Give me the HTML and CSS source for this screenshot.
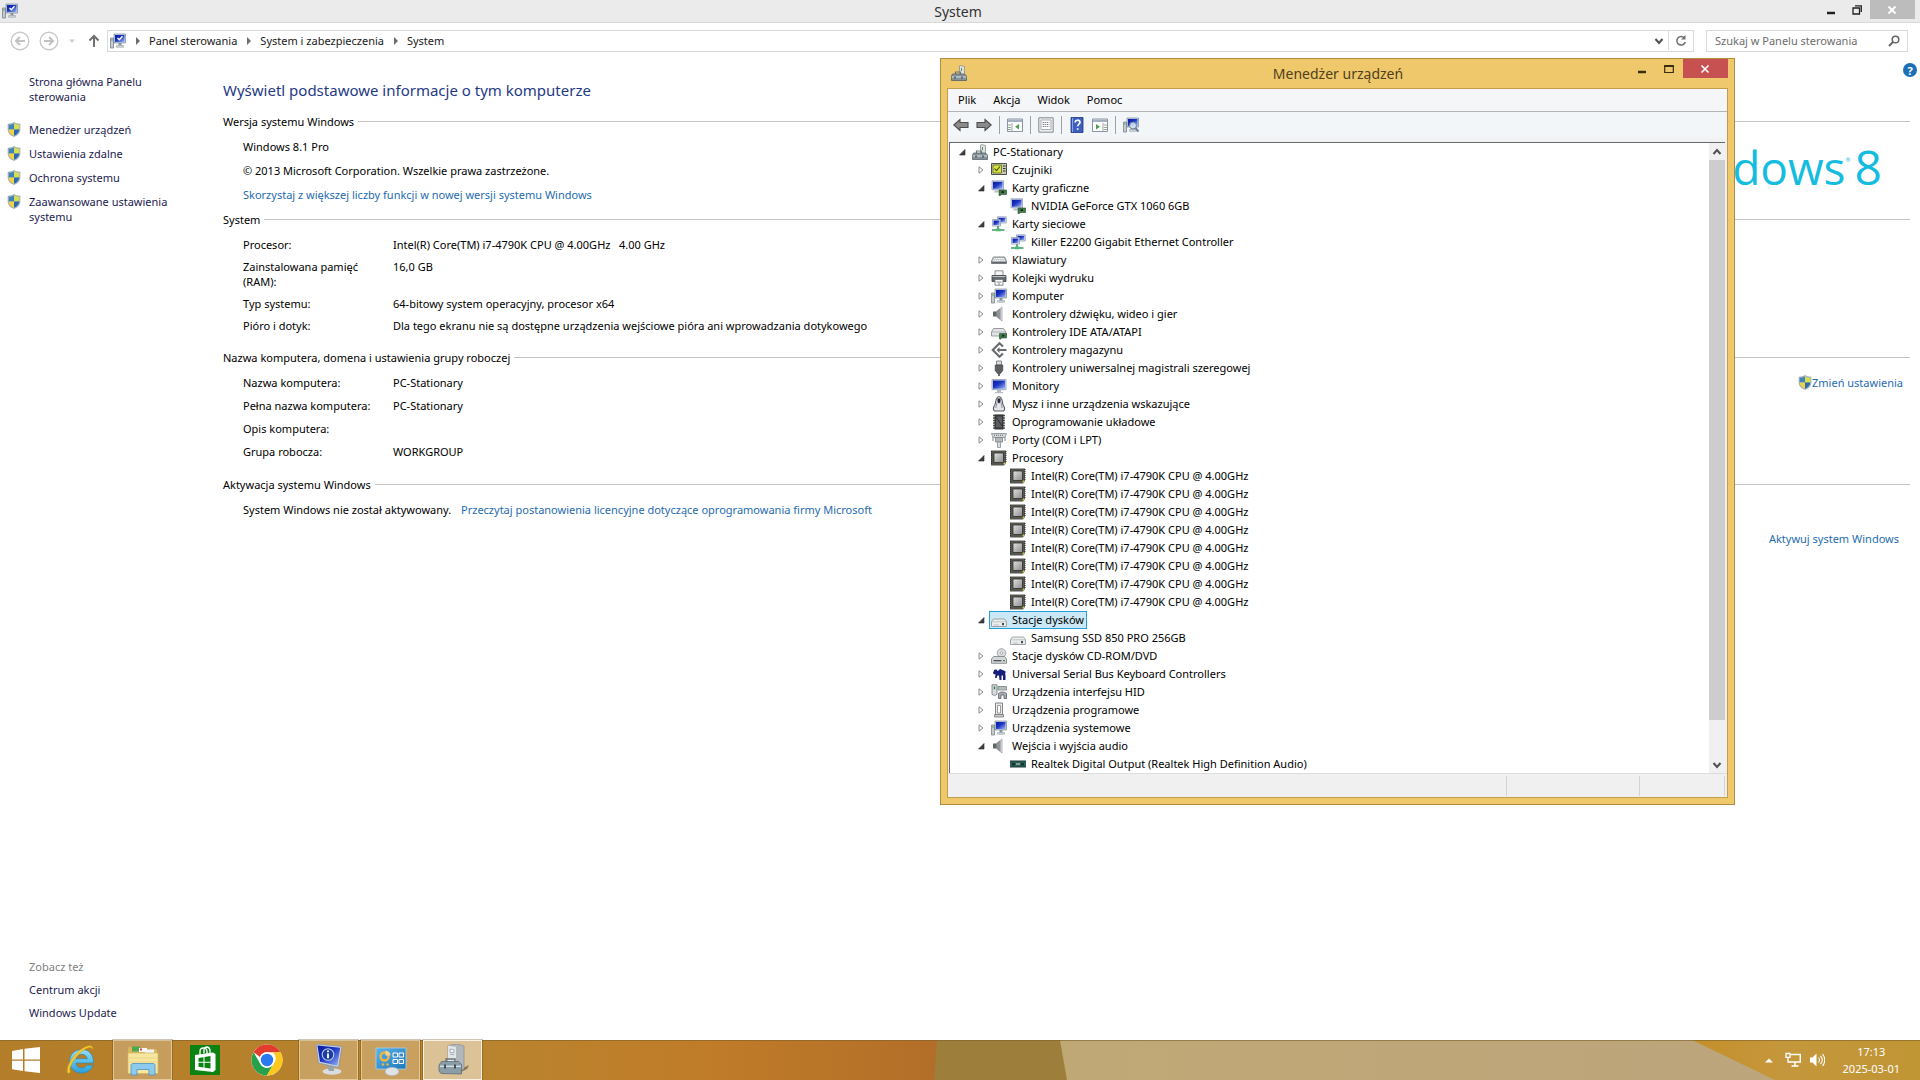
FILE: index.html
```html
<!DOCTYPE html>
<html lang="pl">
<head>
    <meta charset="utf-8">
    <title>System</title>
    <link rel="stylesheet" href="styles.css">
</head>
<body>

<svg class="defs" aria-hidden="true">
    <defs>
        <linearGradient id="g-screen" x1="0" y1="0" x2="1" y2="1">
            <stop offset="0" stop-color="#0a1a9c"/><stop offset=".45" stop-color="#1c34c4"/><stop offset="1" stop-color="#9db8f4"/>
        </linearGradient>
        <linearGradient id="g-metal" x1="0" y1="0" x2="0" y2="1">
            <stop offset="0" stop-color="#f4f5f6"/><stop offset="1" stop-color="#93999f"/>
        </linearGradient>
        <linearGradient id="g-chip" x1="0" y1="0" x2="1" y2="1">
            <stop offset="0" stop-color="#e2e2e2"/><stop offset="1" stop-color="#8c8c8c"/>
        </linearGradient>
        <linearGradient id="g-ie" x1="0" y1="0" x2="0" y2="1">
            <stop offset="0" stop-color="#8fe0fb"/><stop offset="1" stop-color="#2aa0dc"/>
        </linearGradient>
        <linearGradient id="g-panel" x1="0" y1="0" x2="1" y2="1">
            <stop offset="0" stop-color="#5cb4e8"/><stop offset="1" stop-color="#1c78bc"/>
        </linearGradient>
    </defs>
    <symbol id="open" viewBox="0 0 8 8"><path d="M7 1.500v5.500H1.500z" fill="#404040" stroke="#262626" stroke-width=".6"/></symbol>
    <symbol id="shut" viewBox="0 0 8 8"><path d="M2 .8v6.400L6 4z" fill="#fff" stroke="#8c8c8c"/></symbol>
    <symbol id="sep" viewBox="0 0 6 8"><path d="M1 0l4 4-4 4z" fill="#6d6d6d"/></symbol>
    <symbol id="down" viewBox="0 0 10 10"><path d="M1.500 3L5 7l3.500-4" fill="none" stroke="#505050" stroke-width="2"/></symbol>
    <symbol id="up" viewBox="0 0 10 10"><path d="M1.500 7L5 3l3.500 4" fill="none" stroke="#505050" stroke-width="2"/></symbol>
    <symbol id="shield" viewBox="0 0 14 16">
        <path d="M7 0c1.800 1.400 4 1.800 6.800 1.800v6c0 4-2.800 6.700-6.800 8.200C3 14.500.2 11.800.2 7.800v-6C3 1.800 5.200 1.400 7 0z" fill="#a9b4bb"/>
        <path d="M7 1.500V8H1.400V2.900C3.600 2.800 5.400 2.400 7 1.500z" fill="#3f83bd"/>
        <path d="M7 1.500V8h5.600V2.900C10.400 2.800 8.600 2.400 7 1.500z" fill="#d6e04e"/>
        <path d="M7 8v6.700C3.800 13.400 1.500 11.200 1.400 8z" fill="#f0d33e"/>
        <path d="M7 8v6.700c3.200-1.300 5.500-3.500 5.600-6.700z" fill="#2d6cb0"/>
    </symbol>
    <symbol id="pc" viewBox="0 0 16 16">
        <path d="M.5 5h3v10h-3z" fill="#c5cbd0" stroke="#6d757c" stroke-width=".7"/><path d="M1.200 7h1.500" stroke="#3a9a3a"/>
        <path d="M4 1h11.500v9H4z" fill="#c9d4e4" stroke="#66758e" stroke-width=".6"/><path d="M5 2h9.500v7H5z" fill="url(#g-screen)"/>
        <path d="M8.500 10h3v2.500h-3z" fill="#8b949c"/><path d="M6.500 12.500h7v1.800h-7z" fill="#cfd4d8" stroke="#8b949c" stroke-width=".5"/>
    </symbol>
    <symbol id="pccheck" viewBox="0 0 16 16"><use href="#pc" width="16" height="16"/><path d="M7.500 5l1.800 1.800L12.500 3.200" fill="none" stroke="#fff" stroke-width="1.300"/></symbol>
    <symbol id="manager" viewBox="0 0 16 16">
        <path d="M9.500.5l4 1V10h-5V1z" fill="#dfe3e0" stroke="#7d8684" stroke-width=".7"/><path d="M10.500 3v3" stroke="#5d8f64"/>
        <path d="M4.500 9.500V7h5v2.500" fill="none" stroke="#6b747a" stroke-width="1.200"/>
        <path d="M1.500 9h12l2 2v4.500H.5V11z" fill="#85929a" stroke="#4d585f" stroke-width=".7"/><path d="M.8 12h14.400" stroke="#d9e2e6"/><path d="M4 11.500v2M11 11.500v2" stroke="#333" stroke-width="1.200"/>
    </symbol>
    <symbol id="sensor" viewBox="0 0 16 16"><path d="M.5 1.500h15v11H.5z" fill="#c8ccb4" stroke="#4e504a"/><path d="M2 3h8.500v8H2z" fill="#d9e437" stroke="#5c6428" stroke-width=".8"/><path d="M3.500 6.500l2 2.200L9 4.500" fill="none" stroke="#3d4a18" stroke-width="1.100"/><path d="M12 4h2.500M12 6.500h2.500M12 9h2.500" stroke="#333" stroke-width="1.200"/></symbol>
    <symbol id="monitor" viewBox="0 0 16 16"><path d="M1 1.500h14v10.200H1z" fill="#cfd9ea" stroke="#8794ac" stroke-width=".7"/><path d="M2 2.500h12v8.200H2z" fill="url(#g-screen)"/><path d="M6 12h4v2H6zM4 14h8v1.200H4z" fill="#b4bcc3"/></symbol>
    <symbol id="gpu" viewBox="0 0 16 16"><path d="M1 .8h11.500v9H1z" fill="#cfd9ea" stroke="#8794ac" stroke-width=".7"/><path d="M2 1.800h9.500v7H2z" fill="url(#g-screen)"/><path d="M3.500 10.500h4v2h-4z" fill="#b4bcc3"/><path d="M8 10h7.500v4.500H9.500v1H8z" fill="#437b4b" stroke="#244b2b" stroke-width=".6"/><path d="M10.500 11.200H13V13h-2.500z" fill="#162c1a"/></symbol>
    <symbol id="net" viewBox="0 0 16 16"><path d="M6.500.8h8.700V7H6.500z" fill="#dce5f4" stroke="#8391ab" stroke-width=".7"/><path d="M7.500 1.800h6.700V6H7.500z" fill="url(#g-screen)"/><path d="M1.500 3.500h8V10h-8z" fill="#e8eef8" stroke="#8391ab" stroke-width=".7"/><path d="M2.500 4.500h6V9h-6z" fill="url(#g-screen)"/><path d="M7 10v4M1 14h12.500" stroke="#3c9b63" stroke-width="1.600"/><path d="M5 12.500h4.500v2.800H5z" fill="#52b77b"/></symbol>
    <symbol id="keyboard" viewBox="0 0 16 16"><path d="M2.500 5h11l2 4v2.500H.5V9z" fill="#c4c8cb" stroke="#6a6f74" stroke-width=".8"/><path d="M3 6.500h10M2.300 8.300h11.400" stroke="#fff" stroke-dasharray="1.200 .6"/><path d="M.8 10.500h14.400" stroke="#60666c" stroke-width="1.500"/></symbol>
    <symbol id="printer" viewBox="0 0 16 16"><path d="M4 .8h8V6H4z" fill="#f3f4f5" stroke="#777" stroke-width=".8"/><path d="M1 5.500h14v6H1z" fill="#656b70" stroke="#3b4044" stroke-width=".8"/><path d="M1.500 6.500h13" stroke="#bfc5c9"/><path d="M4 9.500h8v5.700H4z" fill="#fff" stroke="#6b7074" stroke-width=".8"/><path d="M5.500 12h5M7 14h2" stroke="#666" stroke-width=".8"/></symbol>
    <symbol id="speaker" viewBox="0 0 16 16"><path d="M2 5.500h3.500v5H2z" fill="#5f6569"/><path d="M5.500 5.500L11 1v14l-5.500-4.500z" fill="#8f9599" stroke="#61676b" stroke-width=".5"/><path d="M9.500 2.500L11 1v14l-1.500-1.500z" fill="#cdd0d3"/></symbol>
    <symbol id="ide" viewBox="0 0 16 16"><path d="M2.500 4.500h10l2.500 3.500v4H.5V8z" fill="#e2e4e5" stroke="#808588" stroke-width=".8"/><path d="M.8 8h14" stroke="#a4a9ac" stroke-width=".8"/><path d="M8.500 9.500h7v4.500H10v1H8.500z" fill="#437b4b" stroke="#244b2b" stroke-width=".6"/><path d="M11 10.800h2.300v1.800H11z" fill="#162c1a"/></symbol>
    <symbol id="storage" viewBox="0 0 16 16"><path d="M12 4.500L8.500 1.300 1.800 8l6.700 6.700L12 11.500" fill="none" stroke="#686c6f" stroke-width="2.200"/><path d="M7 8h8.500" stroke="#686c6f" stroke-width="2"/><path d="M8.500 5v6L5.500 8z" fill="#686c6f"/></symbol>
    <symbol id="usb" viewBox="0 0 16 16"><path d="M5.500 1h5v4h-5z" fill="#dcdee0" stroke="#6e7275" stroke-width=".8"/><path d="M4.200 5h7.600v5.500L9.500 13.500h-3L4.200 10.500z" fill="#5c6063" stroke="#34373a" stroke-width=".6"/><path d="M7.200 13.500h1.600V16H7.200z" fill="#44484a"/></symbol>
    <symbol id="mouse" viewBox="0 0 16 16"><path d="M3.500 15c-1.500-1-1-4 .5-6.500C5 6 4.500.8 8 .8S11 6 12 8.500c1.500 2.500 2 5.500.5 6.500z" fill="#e4e5e8" stroke="#5c5e66" stroke-width="1.100"/><path d="M6.500 2.500h3V6L8 7.500 6.500 6z" fill="#24283c"/><path d="M6 6.500L4.800 12M10 6.500l1.200 5.500" stroke="#777b88" stroke-width=".8"/></symbol>
    <symbol id="firmware" viewBox="0 0 16 16"><path d="M2 1.500h12M2 4h12M2 6.500h12M2 9h12M2 11.500h12M2 14h12" stroke="#555" stroke-width="1.400"/><path d="M3.500.5h9v15h-9z" fill="#35373a"/><path d="M5 2.500h6v11H5z" fill="#5c5f62"/><path d="M5 3l6 9" stroke="#2a2c2e"/></symbol>
    <symbol id="port" viewBox="0 0 16 16"><path d="M.5 1.500h15l-1.500 4H2z" fill="#d2d6d9" stroke="#888d91" stroke-width=".8"/><path d="M3 3.200h10" stroke="#666" stroke-dasharray="1 1"/><path d="M4.500 5.500h7V10h-7z" fill="#b3b8bc" stroke="#7d8286" stroke-width=".8"/><path d="M6.500 10h3v5.500h-3z" fill="#dcdfe1" stroke="#8a8f93" stroke-width=".8"/><path d="M2 5v4M14 5v4" stroke="#999" stroke-width="1.200"/></symbol>
    <symbol id="cpu" viewBox="0 0 16 16"><path d="M0 .5h15V13l-2 2.500H0z" fill="#55564f"/><path d="M.5 1v14M15 1v12" stroke="#2e2f2b" stroke-dasharray="1 1"/><path d="M12.500 12.500h2v2h-2z" fill="#d0bd4c"/><path d="M3 3h9.500v9.500H3z" fill="url(#g-chip)" stroke="#2f302d" stroke-width=".8"/></symbol>
    <symbol id="disk" viewBox="0 0 16 16"><path d="M2.500 7h11l2 2.500v5H.5v-5z" fill="#eceeee" stroke="#8c9193" stroke-width=".8"/><path d="M.8 9.800h14.400" stroke="#b4b9bb" stroke-width=".8"/><path d="M11 11h2v2.200h-2z" fill="#444a4c"/><path d="M3 13h5" stroke="#babfc1"/></symbol>
    <symbol id="cdrom" viewBox="0 0 16 16"><circle cx="10.500" cy="5" r="4.300" fill="#dcdee0" stroke="#8f9497" stroke-width=".8"/><circle cx="10.500" cy="5" r="1.300" fill="#fff" stroke="#8f9497" stroke-width=".7"/><path d="M2.500 8.500h11l2 2.500v4.300H.5V11z" fill="#d3d7da" stroke="#777c80" stroke-width=".8"/><path d="M2.500 12.700h8" stroke="#444" stroke-width="1.200"/><path d="M12 12.700h2" stroke="#3b8b47" stroke-width="1.200"/></symbol>
    <symbol id="usbkb" viewBox="0 0 16 16"><path d="M2 6l3-2.500L7 5l2-2 5 2 .5 5v4H12V9.500h-1.500V14H8.500L8 9.500H6.500L5.500 12H4l.5-3.500L2.500 8z" fill="#16207c"/><path d="M3 4.500h3M10.500 6h4M6 8h7" stroke="#16207c" stroke-width="1.500"/></symbol>
    <symbol id="hid" viewBox="0 0 16 16"><path d="M1 .8h5v9.500c-1.500 1.400-3.500 1.400-5 0z" fill="#d9dcde" stroke="#6d7275" stroke-width=".8"/><path d="M2.700 2.500h1.500v2.800H2.700z" fill="#2d8b45"/><path d="M7 2.500h8.500V6H7z" fill="#cbd0d3" stroke="#777c80" stroke-width=".8"/><path d="M7.500 4h7.500" stroke="#777" stroke-dasharray="1 1"/><path d="M7.500 14.500V9.500c1.500-2 6-2 8 0v5h-2.500V11H10v3.500z" fill="#a6acb0" stroke="#5a5f63" stroke-width=".8"/></symbol>
    <symbol id="soft" viewBox="0 0 16 16"><path d="M4.500 1h7v11.500h-7z" fill="#e8eaeb" stroke="#777" stroke-width=".9"/><path d="M6.500 3.500h3V11h-3z" fill="#fff" stroke="#888" stroke-width=".8"/><path d="M3.500 12.500h9v2.500h-9z" fill="#c6cacc" stroke="#777" stroke-width=".8"/></symbol>
    <symbol id="card" viewBox="0 0 16 16"><path d="M0 5h16v6H0z" fill="#2f5d55"/><path d="M0 5h16M0 11h16" stroke="#1b3a35"/><path d="M2 7h3v2.500H2zM11 7h3v2.500h-3z" fill="#173530"/><path d="M6 8h4" stroke="#8fc0ac" stroke-width="1.500"/></symbol>
    <symbol id="arrow" viewBox="0 0 16 16"><path d="M.8 8L7 2.500v3h8v5H7v3z" fill="#8b8b8b" stroke="#4e4e4e" stroke-width="1.100"/></symbol>
    <symbol id="pane" viewBox="0 0 16 16"><path d="M.5 2h15v12.500H.5z" fill="#fff" stroke="#8a94a2"/><path d="M1 3.800h14" stroke="#a4b1c0" stroke-width="2.500"/><path d="M5 6v8M1 8h3M1 10.500h3M1 12.500h3" stroke="#8aa08c" stroke-width=".9"/><path d="M12 7v5.500L8 9.700z" fill="#4f9b52"/></symbol>
</svg>

<div class="system">
    <header class="titlebar">
        <svg class="icon"><use href="#pccheck"/></svg>
        <h1>System</h1>
        <div class="controls">
            <button aria-label="Minimalizuj"><svg class="mark" viewBox="0 0 10 10"><path d="M1 8h8" stroke="#222" stroke-width="2.500"/></svg></button>
            <button aria-label="Przywróć"><svg class="mark" viewBox="0 0 10 10"><path d="M1 3h6.500v6H1zM3 .8h6.300V7" fill="none" stroke="#222" stroke-width="1.300"/></svg></button>
            <button class="close" aria-label="Zamknij"><svg class="mark" viewBox="0 0 10 10"><path d="M1.500 1.500l7 7m0-7l-7 7" stroke="#fff" stroke-width="1.800"/></svg></button>
        </div>
    </header>

    <nav class="navbar">
        <button class="round" aria-label="Wstecz"><svg viewBox="0 0 20 20"><circle cx="10" cy="10" r="8.800" fill="none" stroke="#c9c9c9" stroke-width="1.400"/><path d="M15 10H6m4-4l-4 4 4 4" fill="none" stroke="#c2c2c2" stroke-width="2"/></svg></button>
        <button class="round" aria-label="Dalej"><svg viewBox="0 0 20 20"><circle cx="10" cy="10" r="8.800" fill="none" stroke="#c9c9c9" stroke-width="1.400"/><path d="M5 10h9m-4-4l4 4-4 4" fill="none" stroke="#c2c2c2" stroke-width="2"/></svg></button>
        <button class="recent" aria-label="Ostatnie strony"><svg viewBox="0 0 8 8"><path d="M1 2.500h6L4 6z" fill="#d0d0d0"/></svg></button>
        <button class="upward" aria-label="W górę"><svg viewBox="0 0 12 14"><path d="M6 13V2M1.500 6.500L6 2l4.500 4.500" fill="none" stroke="#707070" stroke-width="2"/></svg></button>
        <div class="address">
            <svg class="icon"><use href="#pccheck"/></svg>
            <svg class="sep"><use href="#sep"/></svg>
            <a href="#">Panel sterowania</a>
            <svg class="sep"><use href="#sep"/></svg>
            <a href="#">System i zabezpieczenia</a>
            <svg class="sep"><use href="#sep"/></svg>
            <a href="#">System</a>
            <button class="history" aria-label="Poprzednie lokalizacje"><svg><use href="#down"/></svg></button>
            <button class="refresh" aria-label="Odśwież"><svg viewBox="0 0 12 12"><path d="M9.500 3A4.300 4.300 0 1 0 10.300 7" fill="none" stroke="#707070" stroke-width="1.500"/><path d="M10.500 0v4.500H6z" fill="#707070"/></svg></button>
        </div>
        <div class="search">
            <input type="search" aria-label="Szukaj" placeholder="Szukaj w Panelu sterowania">
            <svg viewBox="0 0 12 12"><circle cx="7.500" cy="4.500" r="3.300" fill="none" stroke="#666" stroke-width="1.500"/><path d="M5 7L1 11" stroke="#666" stroke-width="2"/></svg>
        </div>
    </nav>

    <div class="content">
        <aside class="sidebar">
            <a class="home" href="#">Strona główna Panelu sterowania</a>
            <ul class="tasks">
                <li><svg class="shield"><use href="#shield"/></svg><a href="#">Menedżer urządzeń</a></li>
                <li><svg class="shield"><use href="#shield"/></svg><a href="#">Ustawienia zdalne</a></li>
                <li><svg class="shield"><use href="#shield"/></svg><a href="#">Ochrona systemu</a></li>
                <li><svg class="shield"><use href="#shield"/></svg><a href="#">Zaawansowane ustawienia systemu</a></li>
            </ul>
            <div class="seealso">
                <span>Zobacz też</span>
                <a href="#">Centrum akcji</a>
                <a href="#">Windows Update</a>
            </div>
        </aside>

        <main class="info">
            <button class="help" aria-label="Pomoc">?</button>
            <h2>Wyświetl podstawowe informacje o tym komputerze</h2>

            <section class="edition">
                <h3>Wersja systemu Windows</h3>
                <div class="body">
                    <div class="lines">
                        <p>Windows 8.1 Pro</p>
                        <p>© 2013 Microsoft Corporation. Wszelkie prawa zastrzeżone.</p>
                        <p><a href="#">Skorzystaj z większej liczby funkcji w nowej wersji systemu Windows</a></p>
                    </div>
                    <div class="logo">Windows<sup>®</sup><span>8</span></div>
                </div>
            </section>

            <section class="hardware">
                <h3>System</h3>
                <dl class="body">
                    <dt>Procesor:</dt><dd>Intel(R) Core(TM) i7-4790K CPU @ 4.00GHz &nbsp; 4.00 GHz</dd>
                    <dt>Zainstalowana pamięć (RAM):</dt><dd>16,0 GB</dd>
                    <dt>Typ systemu:</dt><dd>64-bitowy system operacyjny, procesor x64</dd>
                    <dt>Pióro i dotyk:</dt><dd>Dla tego ekranu nie są dostępne urządzenia wejściowe pióra ani wprowadzania dotykowego</dd>
                </dl>
            </section>

            <section class="naming">
                <h3>Nazwa komputera, domena i ustawienia grupy roboczej</h3>
                <div class="body">
                    <dl>
                        <dt>Nazwa komputera:</dt><dd>PC-Stationary</dd>
                        <dt>Pełna nazwa komputera:</dt><dd>PC-Stationary</dd>
                        <dt>Opis komputera:</dt><dd></dd>
                        <dt>Grupa robocza:</dt><dd>WORKGROUP</dd>
                    </dl>
                    <a class="change" href="#"><svg class="shield"><use href="#shield"/></svg>Zmień ustawienia</a>
                </div>
            </section>

            <section class="activation">
                <h3>Aktywacja systemu Windows</h3>
                <div class="body">
                    <p>System Windows nie został aktywowany. <a href="#">Przeczytaj postanowienia licencyjne dotyczące oprogramowania firmy Microsoft</a></p>
                    <a class="activate" href="#">Aktywuj system Windows</a>
                </div>
            </section>
        </main>
    </div>
</div>

<div class="devices">
    <header class="caption">
        <svg class="icon"><use href="#manager"/></svg>
        <h1>Menedżer urządzeń</h1>
        <div class="controls">
            <button aria-label="Minimalizuj"><svg class="mark" viewBox="0 0 10 10"><path d="M1 8h8" stroke="#3a2c10" stroke-width="2.500"/></svg></button>
            <button aria-label="Maksymalizuj"><svg class="mark" viewBox="0 0 10 10"><path d="M.7 2h8.600v6.500H.7z" fill="none" stroke="#3a2c10" stroke-width="1.200"/><path d="M.2 2h9.600" stroke="#3a2c10" stroke-width="2"/></svg></button>
            <button class="close" aria-label="Zamknij"><svg class="mark" viewBox="0 0 10 10"><path d="M1.500 1.500l7 7m0-7l-7 7" stroke="#fff" stroke-width="1.600"/></svg></button>
        </div>
    </header>
    <div class="frame">
        <div class="menu">
            <button>Plik</button>
            <button>Akcja</button>
            <button>Widok</button>
            <button>Pomoc</button>
        </div>
        <div class="toolbar">
            <button aria-label="Wstecz"><svg class="icon"><use href="#arrow"/></svg></button>
            <button aria-label="Dalej"><svg class="icon flip"><use href="#arrow"/></svg></button>
            <button class="first" aria-label="Drzewo konsoli"><svg class="icon"><use href="#pane"/></svg></button>
            <button class="first" aria-label="Właściwości"><svg class="icon" viewBox="0 0 16 16"><path d="M.8.8h14.400v14.400H.8z" fill="#eceef0" stroke="#85898f"/><path d="M3 3h10v9.500H3z" fill="#fff" stroke="#979ba1" stroke-width=".8"/><path d="M4.500 5.500h7M4.500 7.500h7M4.500 9.500h7" stroke="#85898f" stroke-dasharray="1.500 .6"/></svg></button>
            <button class="first" aria-label="Pomoc"><svg class="icon" viewBox="0 0 16 16"><path d="M2 .5h12v15H2z" fill="#3c5fc0" stroke="#1d3580" stroke-width=".8"/><path d="M3.500 1v14" stroke="#8ea6e6"/><path d="M6.200 5.500c0-3 4.800-3 4.800-.2 0 1.700-2.300 2-2.300 4M8.700 11.200v1.600" fill="none" stroke="#fff" stroke-width="1.700"/></svg></button>
            <button aria-label="Okienko akcji"><svg class="icon flip"><use href="#pane"/></svg></button>
            <button class="first" aria-label="Skanuj w poszukiwaniu zmian sprzętu"><svg class="icon" viewBox="0 0 16 16"><use href="#pc" width="16" height="16"/><circle cx="10" cy="8.500" r="3.500" fill="#dcebfa" fill-opacity=".8" stroke="#6e7f98"/><path d="M12.500 11l3 3.500" stroke="#6e7f98" stroke-width="2"/></svg></button>
        </div>
        <div class="pane">
            <ul class="tree">
                <li><div class="row"><svg class="toggle"><use href="#open"/></svg><svg class="icon"><use href="#manager"/></svg><span>PC-Stationary</span></div>
                    <ul>
                        <li><div class="row"><svg class="toggle"><use href="#shut"/></svg><svg class="icon"><use href="#sensor"/></svg><span>Czujniki</span></div></li>
                        <li><div class="row"><svg class="toggle"><use href="#open"/></svg><svg class="icon"><use href="#gpu"/></svg><span>Karty graficzne</span></div>
                            <ul>
                                <li><div class="row leaf"><svg class="icon"><use href="#gpu"/></svg><span>NVIDIA GeForce GTX 1060 6GB</span></div></li>
                            </ul>
                        </li>
                        <li><div class="row"><svg class="toggle"><use href="#open"/></svg><svg class="icon"><use href="#net"/></svg><span>Karty sieciowe</span></div>
                            <ul>
                                <li><div class="row leaf"><svg class="icon"><use href="#net"/></svg><span>Killer E2200 Gigabit Ethernet Controller</span></div></li>
                            </ul>
                        </li>
                        <li><div class="row"><svg class="toggle"><use href="#shut"/></svg><svg class="icon"><use href="#keyboard"/></svg><span>Klawiatury</span></div></li>
                        <li><div class="row"><svg class="toggle"><use href="#shut"/></svg><svg class="icon"><use href="#printer"/></svg><span>Kolejki wydruku</span></div></li>
                        <li><div class="row"><svg class="toggle"><use href="#shut"/></svg><svg class="icon"><use href="#pc"/></svg><span>Komputer</span></div></li>
                        <li><div class="row"><svg class="toggle"><use href="#shut"/></svg><svg class="icon"><use href="#speaker"/></svg><span>Kontrolery dźwięku, wideo i gier</span></div></li>
                        <li><div class="row"><svg class="toggle"><use href="#shut"/></svg><svg class="icon"><use href="#ide"/></svg><span>Kontrolery IDE ATA/ATAPI</span></div></li>
                        <li><div class="row"><svg class="toggle"><use href="#shut"/></svg><svg class="icon"><use href="#storage"/></svg><span>Kontrolery magazynu</span></div></li>
                        <li><div class="row"><svg class="toggle"><use href="#shut"/></svg><svg class="icon"><use href="#usb"/></svg><span>Kontrolery uniwersalnej magistrali szeregowej</span></div></li>
                        <li><div class="row"><svg class="toggle"><use href="#shut"/></svg><svg class="icon"><use href="#monitor"/></svg><span>Monitory</span></div></li>
                        <li><div class="row"><svg class="toggle"><use href="#shut"/></svg><svg class="icon"><use href="#mouse"/></svg><span>Mysz i inne urządzenia wskazujące</span></div></li>
                        <li><div class="row"><svg class="toggle"><use href="#shut"/></svg><svg class="icon"><use href="#firmware"/></svg><span>Oprogramowanie układowe</span></div></li>
                        <li><div class="row"><svg class="toggle"><use href="#shut"/></svg><svg class="icon"><use href="#port"/></svg><span>Porty (COM i LPT)</span></div></li>
                        <li><div class="row"><svg class="toggle"><use href="#open"/></svg><svg class="icon"><use href="#cpu"/></svg><span>Procesory</span></div>
                            <ul>
                                <li><div class="row leaf"><svg class="icon"><use href="#cpu"/></svg><span>Intel(R) Core(TM) i7-4790K CPU @ 4.00GHz</span></div></li>
                                <li><div class="row leaf"><svg class="icon"><use href="#cpu"/></svg><span>Intel(R) Core(TM) i7-4790K CPU @ 4.00GHz</span></div></li>
                                <li><div class="row leaf"><svg class="icon"><use href="#cpu"/></svg><span>Intel(R) Core(TM) i7-4790K CPU @ 4.00GHz</span></div></li>
                                <li><div class="row leaf"><svg class="icon"><use href="#cpu"/></svg><span>Intel(R) Core(TM) i7-4790K CPU @ 4.00GHz</span></div></li>
                                <li><div class="row leaf"><svg class="icon"><use href="#cpu"/></svg><span>Intel(R) Core(TM) i7-4790K CPU @ 4.00GHz</span></div></li>
                                <li><div class="row leaf"><svg class="icon"><use href="#cpu"/></svg><span>Intel(R) Core(TM) i7-4790K CPU @ 4.00GHz</span></div></li>
                                <li><div class="row leaf"><svg class="icon"><use href="#cpu"/></svg><span>Intel(R) Core(TM) i7-4790K CPU @ 4.00GHz</span></div></li>
                                <li><div class="row leaf"><svg class="icon"><use href="#cpu"/></svg><span>Intel(R) Core(TM) i7-4790K CPU @ 4.00GHz</span></div></li>
                            </ul>
                        </li>
                        <li><div class="row selected"><svg class="toggle"><use href="#open"/></svg><svg class="icon"><use href="#disk"/></svg><span>Stacje dysków</span></div>
                            <ul>
                                <li><div class="row leaf"><svg class="icon"><use href="#disk"/></svg><span>Samsung SSD 850 PRO 256GB</span></div></li>
                            </ul>
                        </li>
                        <li><div class="row"><svg class="toggle"><use href="#shut"/></svg><svg class="icon"><use href="#cdrom"/></svg><span>Stacje dysków CD-ROM/DVD</span></div></li>
                        <li><div class="row"><svg class="toggle"><use href="#shut"/></svg><svg class="icon"><use href="#usbkb"/></svg><span>Universal Serial Bus Keyboard Controllers</span></div></li>
                        <li><div class="row"><svg class="toggle"><use href="#shut"/></svg><svg class="icon"><use href="#hid"/></svg><span>Urządzenia interfejsu HID</span></div></li>
                        <li><div class="row"><svg class="toggle"><use href="#shut"/></svg><svg class="icon"><use href="#soft"/></svg><span>Urządzenia programowe</span></div></li>
                        <li><div class="row"><svg class="toggle"><use href="#shut"/></svg><svg class="icon"><use href="#pc"/></svg><span>Urządzenia systemowe</span></div></li>
                        <li><div class="row"><svg class="toggle"><use href="#open"/></svg><svg class="icon"><use href="#speaker"/></svg><span>Wejścia i wyjścia audio</span></div>
                            <ul>
                                <li><div class="row leaf"><svg class="icon"><use href="#card"/></svg><span>Realtek Digital Output (Realtek High Definition Audio)</span></div></li>
                            </ul>
                        </li>
                    </ul>
                </li>
            </ul>
            <div class="scrollbar">
                <button aria-label="W górę"><svg><use href="#up"/></svg></button>
                <div class="track"><div class="thumb"></div></div>
                <button aria-label="W dół"><svg><use href="#down"/></svg></button>
            </div>
        </div>
        <div class="status"><span></span><span></span><span></span></div>
    </div>
</div>

<footer class="taskbar">
    <svg class="wallpaper" viewBox="0 0 1920 40" preserveAspectRatio="none" aria-hidden="true">
        <defs>
            <linearGradient id="g-left"><stop offset="0" stop-color="#b37d29"/><stop offset=".5" stop-color="#b9842e"/><stop offset=".75" stop-color="#c07c28"/><stop offset="1" stop-color="#b26e28"/></linearGradient>
            <linearGradient id="g-tan"><stop offset="0" stop-color="#c0a876"/><stop offset="1" stop-color="#bda57c"/></linearGradient>
            <linearGradient id="g-right"><stop offset="0" stop-color="#c48f2a"/><stop offset=".4" stop-color="#c5973c"/><stop offset="1" stop-color="#c09534"/></linearGradient>
        </defs>
        <path d="M0 0h940v40H0z" fill="url(#g-left)"/>
        <path d="M937 0h130v40H934z" fill="#9e7e3b"/>
        <path d="M1060 0h720v40H1067z" fill="url(#g-tan)"/>
        <path d="M1692 0h228v40h-145z" fill="url(#g-right)"/>
        <path d="M0 0h1920v1H0z" fill="#7b6129" opacity=".6"/>
    </svg>
    <button class="start" aria-label="Start"><svg viewBox="0 0 28 26"><path d="M0 4l11-2v10.500H0zM12.500 1.700L28 0v12.500H12.500zM0 13.800h11V24L0 22.300zM12.500 13.800H28V26l-15.500-1.800z" fill="#fff"/></svg></button>
    <div class="apps">
        <button class="app" aria-label="Internet Explorer"><svg viewBox="0 0 32 32"><path d="M28.500 19H11c.2 3 2.500 5 5.500 5 2.300 0 4-1 5-2.800h6.500C26.200 26 22 29 16.500 29 9.500 29 4.500 24 4.500 17.300S9.800 5.500 16.700 5.500c7.300 0 12 5.200 11.800 13.500zM11 14.800h11.300c-.4-2.700-2.500-4.500-5.600-4.500-3 0-5.200 1.800-5.700 4.500z" fill="url(#g-ie)" stroke="#2384bc" stroke-width=".6"/><path d="M3.500 29.500C-1 26 7 12 15 6S29.500.5 27.500 6c.2-3.800-5-3.300-11 1.800S2.500 24 5.500 28z" fill="#f4cb2e" stroke="#c69a1a" stroke-width=".5"/></svg></button>
        <button class="app running" aria-label="Eksplorator plików"><svg viewBox="0 0 32 32"><path d="M1 4.500c0-1 .5-1.500 1.500-1.500H9l2 2h17c1.500 0 2 .7 2 2v21H1z" fill="#d9b75f"/><path d="M5 2.500h8v5H5z" fill="#4da84f"/><path d="M12 4h8v4h-8z" fill="#f7f7f7"/><path d="M13 4.500h2v2h-2z" fill="#d0483c"/><path d="M18 5.500h9v4h-9z" fill="#f0f4f7"/><path d="M1 9h30v20.500H1z" fill="#f6e6a0" stroke="#d2b55e" stroke-width=".7"/><path d="M1.500 14h29M1.500 18h29" stroke="#ecd786"/><path d="M4 31V21.500c0-1.400.8-2 2-2h20c1.200 0 2 .6 2 2V31h-6v-5.500H10V31z" fill="#8dcbee" stroke="#4c93c2" stroke-width=".8"/></svg></button>
        <button class="app" aria-label="Sklep"><svg viewBox="0 0 32 32"><path d="M1 1h30v30H1z" fill="#0b8212"/><path d="M6 11l18-2.500 2.500 1.500v16L24 28 6 26z" fill="#fff"/><path d="M11 11V7.500c0-4.500 7-4.800 7 0v2.500M15 9.500V6c.5-4 5-4 6 0v3" fill="none" stroke="#fff" stroke-width="1.300"/><path d="M9.500 14l5-.8v4.600h-5zM15.500 13l6-1v5.800h-6zM9.500 18.800h5v4.700l-5-.7zM15.500 18.800h6v5.800l-6-.9z" fill="#0b8212"/></svg></button>
        <button class="app" aria-label="Google Chrome"><svg viewBox="0 0 32 32"><circle cx="16" cy="16" r="15.500" fill="#fff"/><path d="M2.600 8.200A15.500 15.500 0 0 1 29.500 8.300H16a7.700 7.700 0 0 0-7 4.600z" fill="#e33b2e"/><path d="M2.600 8.200A15.500 15.500 0 0 0 15.900 31.500l6.800-11.700a7.700 7.700 0 0 1-13.400 0z" fill="#25a04b"/><path d="M29.500 8.300a15.500 15.500 0 0 1-13.600 23.200l6.800-11.700A7.700 7.700 0 0 0 21.500 8.300z" fill="#fcc81c"/><circle cx="16" cy="16" r="7.700" fill="#fff"/><circle cx="16" cy="16" r="6.200" fill="#2a79f0"/></svg></button>
        <button class="app running" aria-label="System"><svg viewBox="0 0 32 32"><ellipse cx="19" cy="27.500" rx="9.500" ry="3.300" fill="#d8dde0"/><path d="M13 21l8 1v5h-5z" fill="#9ba4ab"/><path d="M3 0l26 2.500-3.500 21L5.500 19z" fill="#cdd6e3" stroke="#7b879b" stroke-width=".6"/><path d="M4.500 1.500L27.300 3.800l-3 18L7 17.700z" fill="url(#g-screen)"/><circle cx="15" cy="10.500" r="5.800" fill="#1c3d9c" stroke="#b8caf0" stroke-width="1.100"/><path d="M15 9.500v4.800M15 6.500v1.800" stroke="#fff" stroke-width="1.800"/></svg></button>
        <button class="app running" aria-label="Panel sterowania"><svg viewBox="0 0 32 32"><path d="M1 4h30v21H1z" fill="url(#g-panel)" stroke="#a5d0ec" stroke-width=".8"/><circle cx="9.500" cy="12.500" r="4" fill="none" stroke="#efb443" stroke-width="2.400"/><path d="M10.500 11.500V6.500a5.500 5.500 0 0 1 5 5z" fill="#f6d28a"/><path d="M18 9h4.500v4H18zM24 9h4.500v4H24zM18 15.500h4.500v4H18zM24 15.500h4.500v4H24z" fill="#3b8cc8" stroke="#fff"/><circle cx="8" cy="20.500" r="1.300" fill="#efb443"/><circle cx="12.500" cy="20.500" r="1.300" fill="#efb443"/><ellipse cx="17" cy="27.500" rx="7" ry="4.300" fill="#dfe3e6" stroke="#9da5ab" stroke-width=".6"/></svg></button>
        <button class="app running active" aria-label="Menedżer urządzeń"><svg viewBox="0 0 32 32"><path d="M26 24l6-3-2 4-6 3z" fill="#635437" opacity=".7"/><path d="M11 1.500L20 0l7 2v23l-8 3.500-8-2z" fill="#b1b7bb" stroke="#7d8488" stroke-width=".6"/><path d="M11 1.500l8 1.500v25l-8-2z" fill="#e3e6e8"/><path d="M13 5l4 .8v3L13 8zM13 10l4 .8" fill="#f9f9f9" stroke="#8b9296" stroke-width=".7"/><path d="M9 18v-3h9v3" fill="none" stroke="#6a757b" stroke-width="1.500"/><path d="M4.500 17.500h17l3 3V30L4 29.500 2 27v-6z" fill="#8b9ea8" stroke="#55646c" stroke-width=".7"/><path d="M3 22.300h21" stroke="#dae4e9" stroke-width="1.300"/><path d="M8 20.500v4M18 20.500v4" stroke="#37444b" stroke-width="1.800"/></svg></button>
    </div>
    <div class="tray">
        <button aria-label="Pokaż ukryte ikony"><svg viewBox="0 0 16 16"><path d="M4 10.500L8 6.500l4 4z" fill="#fff"/></svg></button>
        <button aria-label="Sieć"><svg viewBox="0 0 16 16"><path d="M5.500 2.500h9.800v7.500H5M10 10v3.500M6.500 14h7" fill="none" stroke="#fff" stroke-width="1.500"/><path d="M1 1.500h4v3.800H1zM3 5.500v4.500h2.500" fill="none" stroke="#fff" stroke-width="1.300"/></svg></button>
        <button aria-label="Głośność"><svg viewBox="0 0 16 16"><path d="M1 5.500h2.500L7.500 1.500v13l-4-4H1z" fill="#fff"/><path d="M9.500 5.500c1.300 1.600 1.300 3.400 0 5M11.500 3.800c2.200 2.600 2.200 5.800 0 8.400M13.500 2c3 3.500 3 8.500 0 12" fill="none" stroke="#fff" stroke-width="1.100"/></svg></button>
        <div class="clock"><time>17:13</time><time>2025-03-01</time></div>
    </div>
</footer>

</body>
</html>
```

FILE: styles.css
```css
* {
    box-sizing: border-box;
}

body {
    margin: 0;
    min-height: 100vh;
    display: flex;
    flex-direction: column;
    background: #fff;
    color: #000;
    font-family: "Noto Sans", "Open Sans", sans-serif;
    font-size: 11px;
    line-height: 15px;
}

h1, h2, h3, p, ul, dl, dd {
    margin: 0;
    padding: 0;
    font-weight: normal;
}

ul {
    list-style: none;
}

a {
    color: #1f6bb0;
    text-decoration: none;
}

a:hover {
    text-decoration: underline;
}

button {
    display: flex;
    align-items: center;
    justify-content: center;
    padding: 0;
    border: 0;
    background: none;
    color: inherit;
    font: inherit;
}

.defs {
    position: absolute;
    width: 0;
    height: 0;
}

.icon {
    flex: none;
    width: 16px;
    height: 16px;
}

.shield {
    flex: none;
    width: 14px;
    height: 15px;
}

.mark {
    width: 10px;
    height: 10px;
}

.flip {
    transform: scaleX(-1);
}

/* system window */
.system {
    flex: 1;
    display: flex;
    flex-direction: column;
}

.titlebar {
    display: flex;
    justify-content: space-between;
    height: 23px;
    padding: 0 5px 0 2px;
    background: #ebebeb;
    border-bottom: 1px solid #d8d8d8;
}

.titlebar .icon {
    margin: 3px 80px 0 0;
}

.titlebar h1, .caption h1 {
    font-size: 14px;
    line-height: 23px;
    color: #333;
}

.controls {
    display: flex;
}

.controls button {
    width: 26px;
    height: 19px;
}

.controls .close {
    width: 45px;
    background: #bcbcbc;
}

.navbar {
    display: flex;
    align-items: center;
    height: 36px;
    padding: 0 12px 0 10px;
}

.round, .round svg {
    width: 20px;
    height: 20px;
}

.round {
    margin-right: 9px;
}

.recent svg {
    width: 8px;
    height: 8px;
}

.upward {
    margin: 0 7px 0 12px;
}

.upward svg {
    width: 12px;
    height: 14px;
}

.address {
    flex: 1;
    display: flex;
    align-items: center;
    height: 22px;
    margin-right: 12px;
    padding: 0 0 1px 2px;
    border: 1px solid #d9d9d9;
}

.address a {
    padding-bottom: 1px;
    color: #1a1a1a;
}

.sep {
    width: 6px;
    height: 8px;
    margin: 0 8px 0 9px;
}

.history, .refresh {
    align-self: stretch;
    width: 25px;
}

.history {
    width: 18px;
    margin-left: auto;
}

.refresh {
    border-left: 1px solid #d9d9d9;
}

.history svg, .scrollbar svg {
    width: 10px;
    height: 10px;
}

.refresh svg, .search svg {
    width: 12px;
    height: 12px;
}

.search {
    display: flex;
    align-items: center;
    width: 202px;
    height: 22px;
    padding: 0 7px 1px 8px;
    border: 1px solid #d9d9d9;
}

.search input {
    flex: 1;
    min-width: 0;
    padding: 0 0 1px;
    border: 0;
    outline: 0;
    font: inherit;
}

.search input::placeholder {
    color: #6d6d6d;
}

.content {
    flex: 1;
    display: flex;
}

.sidebar {
    display: flex;
    flex-direction: column;
    width: 223px;
    padding: 15px 40px 20px 7px;
}

.sidebar a {
    color: #1c1c50;
}

.home {
    padding-left: 22px;
}

.tasks {
    display: grid;
    gap: 9px;
    margin-top: 18px;
}

.tasks li {
    display: flex;
    gap: 8px;
}

.seealso {
    display: grid;
    gap: 8px;
    margin-top: auto;
    padding-left: 22px;
}

.seealso span {
    color: #808080;
}

.info {
    flex: 1;
    padding: 20px 10px 0 0;
}

.help {
    position: absolute;
    top: 63px;
    right: 3px;
    width: 14px;
    height: 14px;
    border-radius: 50%;
    background: #1d6fb8;
    color: #fff;
    font-weight: bold;
}

.info h2 {
    font-size: 15px;
    line-height: 22px;
    color: #1f3a85;
}

.info section {
    margin-top: 13px;
}

.info h3 {
    display: flex;
    align-items: center;
    gap: 4px;
    font-size: 11px;
}

.info h3::after {
    content: "";
    flex: 1;
    border-top: 1px solid #c4c4c4;
}

.info .body {
    padding: 10px 7px 0 20px;
}

.info .edition .body, .naming .body {
    display: flex;
    justify-content: space-between;
}

.lines {
    display: grid;
    gap: 9px;
    align-content: start;
}

.logo {
    display: flex;
    padding-right: 21px;
    color: #14bce0;
    font-family: "Open Sans", sans-serif;
    font-size: 46px;
    line-height: 56px;
}

.logo sup {
    font-size: 6px;
    line-height: 42px;
}

.logo span {
    margin-left: 4px;
    font-size: 48px;
}

.info .hardware {
    margin-top: 14px;
}

.hardware h3 {
    margin-top: -4px;
}

dl {
    display: grid;
    grid-template-columns: 150px 1fr;
    gap: 7px 0;
}

dt {
    padding-right: 20px;
}

.info .naming {
    margin-top: 17px;
}

.naming dl {
    flex: 1;
    gap: 8px 0;
}

.change {
    display: flex;
    align-self: start;
}

.info .activation {
    margin-top: 18px;
}

.activation p a {
    margin-left: 7px;
}

.activate {
    display: block;
    width: fit-content;
    margin: 14px 4px 0 auto;
}

/* device manager window */
.devices {
    position: absolute;
    top: 58px;
    left: 940px;
    width: 795px;
    padding: 0 6px 6px;
    background: #f0c86c;
    border: 1px solid #b08d3e;
}

.caption {
    display: flex;
    justify-content: space-between;
    height: 29px;
}

.caption .icon {
    margin: 6px 80px 0 4px;
}

.caption h1 {
    line-height: 29px;
    color: #4f3f1c;
}

.caption .controls button {
    width: 27px;
}

.caption .controls .close {
    width: 45px;
    background: #c75050;
}

.frame {
    background: #f0f0f0;
    border: 1px solid #c19d4c;
}

.menu {
    display: flex;
    gap: 17px;
    height: 23px;
    padding: 0 10px 2px;
    background: #f5f6f7;
    border-bottom: 1px solid #b4b4b4;
}

.toolbar {
    display: flex;
    align-items: center;
    gap: 7px;
    height: 30px;
    padding: 0 5px 4px;
    background: linear-gradient(#f3f6f9 75%, #f0f0f0);
}

.toolbar .first {
    height: 18px;
    padding-left: 7px;
    border-left: 1px solid #a0a0a0;
}

.pane {
    display: flex;
    margin: 0 2px 0 1px;
    background: #fff;
    border-top: 1px solid #696969;
    border-left: 1px solid #696969;
}

.tree {
    flex: 1;
    overflow: hidden;
    padding-left: 8px;
}

.tree ul {
    padding-left: 19px;
}

.row {
    display: flex;
    align-items: center;
    height: 18px;
}

.row span {
    padding: 0 3px;
    line-height: 18px;
    white-space: nowrap;
}

.toggle {
    width: 8px;
    height: 8px;
    margin-right: 6px;
}

.row .icon {
    margin-right: 2px;
}

.leaf {
    padding-left: 14px;
}

/* highlight covers the icon and the name, not the toggle */
.selected {
    width: fit-content;
    background: linear-gradient(#cbe8f6, #cbe8f6) 12px 0 no-repeat;
    position: relative;
}

.selected::after {
    content: "";
    position: absolute;
    inset: 0 0 0 12px;
    border: 1px solid #26a0da;
}

.scrollbar {
    display: flex;
    flex-direction: column;
    width: 16px;
    background: #f0f0f0;
}

.scrollbar button {
    width: 16px;
    height: 17px;
}

.track {
    flex: 1;
}

.thumb {
    height: 94%;
    background: #cdcdcd;
}

.status {
    display: flex;
    height: 24px;
    padding: 2px 2px 1px 0;
    border-top: 1px solid #dcdcdc;
}

.status span {
    width: 133px;
    border-right: 1px solid #d4d4d4;
}

.status span:first-child {
    flex: 1;
}

.status span:last-child {
    width: 85px;
}

/* taskbar */
.taskbar {
    position: relative;
    display: flex;
    height: 40px;
    background: #b9842e;
}

.wallpaper {
    position: absolute;
    width: 100%;
    height: 100%;
}

.start {
    position: relative;
    width: 51px;
}

.start svg {
    width: 28px;
    height: 26px;
}

.apps {
    position: relative;
    display: flex;
    gap: 3px;
}

.app {
    width: 59px;
}

.app svg {
    width: 32px;
    height: 32px;
}

.running {
    background: rgba(255, 255, 255, .24);
    border: 1px solid rgba(255, 240, 210, .5);
    outline: 1px solid rgba(90, 60, 10, .3);
    outline-offset: 0;
}

.active {
    background: rgba(255, 255, 255, .5);
    border-color: #f8f0e0;
}

.tray {
    position: relative;
    display: flex;
    align-items: center;
    gap: 8px;
    margin-left: auto;
    padding-right: 20px;
    color: #fff;
}

.tray svg {
    width: 16px;
    height: 16px;
}

.clock {
    display: grid;
    margin-left: 10px;
    line-height: 17px;
    text-align: center;
}
```
